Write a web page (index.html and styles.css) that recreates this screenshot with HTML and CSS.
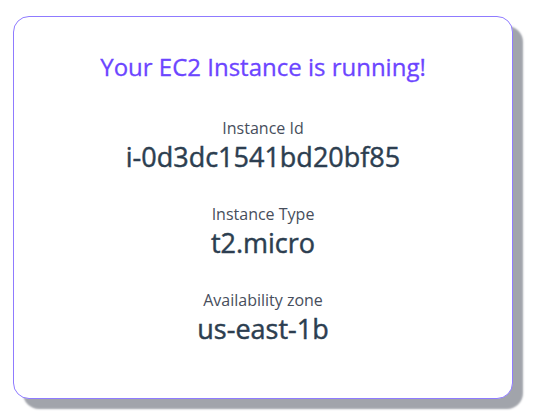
FILE: index.html
```html
<!DOCTYPE html>
<html lang="en">
<head>
<meta charset="utf-8">
<title>EC2 Instance</title>
<link rel="stylesheet" href="styles.css">
</head>
<body>
<main class="page">
  <section class="card">
    <h1 class="title">Your EC2 Instance is running!</h1>
    <div class="field">
      <div class="label">Instance Id</div>
      <div class="value">i-0d3dc1541bd20bf85</div>
    </div>
    <div class="field">
      <div class="label">Instance Type</div>
      <div class="value">t2.micro</div>
    </div>
    <div class="field">
      <div class="label">Availability zone</div>
      <div class="value">us-east-1b</div>
    </div>
  </section>
</main>
</body>
</html>
```

FILE: styles.css
```css
html, body {
  margin: 0;
  padding: 0;
  background: #ffffff;
}

body {
  font-family: "Open Sans", "Noto Sans", sans-serif;
  min-height: 100vh;
}

.page {
  padding: 16px 0 18px 13px;
}

.card {
  box-sizing: border-box;
  width: 500px;
  height: 383px;
  background: #ffffff;
  border: 1px solid #8f7bff;
  border-radius: 16px;
  box-shadow: 10px 10px 2px #a1a4ab;
  padding: 33px 0 0;
  display: flex;
  flex-direction: column;
  align-items: center;
  text-align: center;
}

.title {
  margin: 0 0 34px;
  font-size: 24px;
  font-weight: 400;
  line-height: normal;
  color: #6c45ff;
  -webkit-text-stroke: 0.3px #6c45ff;
}

.field {
  display: flex;
  flex-direction: column;
  align-items: center;
  margin-bottom: 28px;
}

.label {
  font-size: 16px;
  line-height: 22px;
  color: #474e5c;
}

.value {
  font-size: 27px;
  font-weight: 400;
  line-height: 36px;
  color: #2c3e50;
  -webkit-text-stroke: 0.45px #2c3e50;
}
```
